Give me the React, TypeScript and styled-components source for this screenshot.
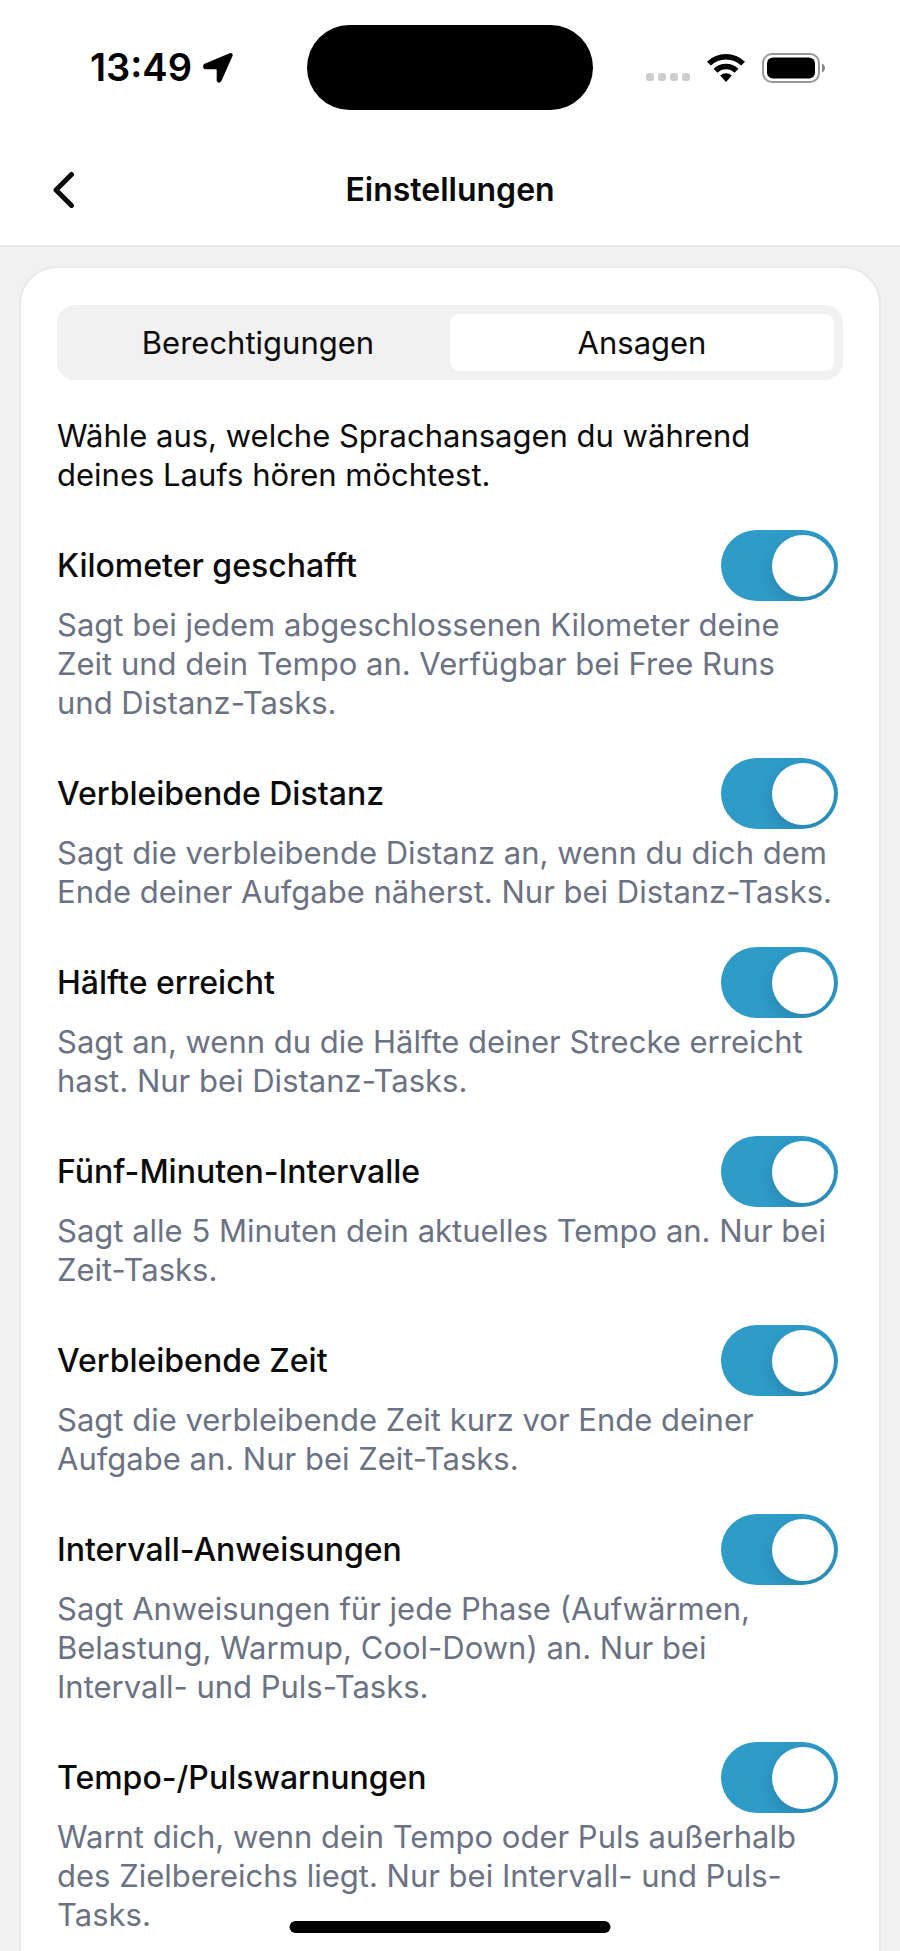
import React, { useState } from "react";
import styled, { createGlobalStyle } from "styled-components";

const GlobalStyle = createGlobalStyle`
  *, *::before, *::after { box-sizing: border-box; }
  body {
    margin: 0;
    background: #f1f1f1;
    color: #0b0b0b;
    font-family: Inter, "Liberation Sans", sans-serif;
    font-size: 31px;
    line-height: 39px;
  }
`;

const Screen = styled.div`
  min-height: 100vh;
  display: flex;
  flex-direction: column;
`;

const Header = styled.header`
  background: #fff;
  border-bottom: 2px solid #ebebeb;
`;

const StatusBar = styled.div`
  display: grid;
  grid-template-columns: 1fr 286px 1fr;
  align-items: center;
  padding: 25px 75px 24px;
  color: #000;
`;

const Clock = styled.div`
  display: flex;
  align-items: center;
  gap: 11px;
  padding-left: 15px;
  font-size: 38px;
  font-weight: 600;
`;

const Island = styled.div`
  height: 85px;
  border-radius: 43px;
  background: #000;
`;

const Indicators = styled.div`
  display: flex;
  align-items: center;
  justify-content: flex-end;
  gap: 16px;
`;

const NavBar = styled.div`
  display: grid;
  grid-template-columns: 48px 1fr 48px;
  align-items: center;
  height: 111px;
  padding: 0 40px 1px;
`;

const BackButton = styled.button`
  display: flex;
  align-items: center;
  justify-content: center;
  height: 64px;
  padding: 0;
  border: 0;
  background: none;
  color: inherit;
`;

const Title = styled.h1`
  margin: 0;
  font-size: 32px;
  font-weight: 600;
  text-align: center;
`;

const Card = styled.main`
  flex: 1;
  margin: 19px 19px 0;
  padding: 37px 36px 0;
  border: 2px solid #e8e8ed;
  border-bottom: 0;
  border-radius: 38px 38px 0 0;
  background: #fff;
`;

const Tabs = styled.div`
  display: grid;
  grid-template-columns: 1fr 1fr;
  height: 75px;
  padding: 9px;
  border-radius: 18px;
  background: #f1f1f1;
`;

const Tab = styled.button<{ $active: boolean }>`
  padding: 0;
  border: 0;
  border-radius: 9px;
  background: ${(p) => (p.$active ? "#fff" : "transparent")};
  color: inherit;
  font: inherit;
`;

const Intro = styled.p`
  margin: 36px 0;
`;

const List = styled.div`
  display: flex;
  flex-direction: column;
  gap: 36px;
`;

const Setting = styled.section`
  display: flex;
  flex-direction: column;
  gap: 4px;
`;

const SettingHead = styled.div`
  display: flex;
  align-items: center;
  justify-content: space-between;
  padding-right: 5px;
`;

const Name = styled.label`
  font-size: 32px;
  font-weight: 500;
`;

const Switch = styled.input`
  appearance: none;
  flex: none;
  display: flex;
  align-items: center;
  width: 117px;
  height: 71px;
  margin: 0;
  padding: 0 4px;
  border-radius: 36px;
  background: #d9d9de;
  overflow: hidden;

  &::before {
    content: "";
    width: 62px;
    height: 62px;
    border-radius: 50%;
    background: #fff;
    box-shadow: 0 6px 16px rgba(0, 0, 0, 0.15);
  }

  &:checked {
    justify-content: flex-end;
    background: #2f9bc9;
  }
`;

const Description = styled.p`
  margin: 0;
  padding-right: 8px;
  color: #6b7283;
`;

const HomeIndicator = styled.div`
  position: fixed;
  bottom: 18px;
  left: 50%;
  width: 321px;
  height: 12px;
  border-radius: 6px;
  background: #000;
  transform: translateX(-50%);
`;

const LocationIcon = () => (
  <svg width="30" height="30" viewBox="0 0 30 30" aria-hidden="true">
    <path d="M26.6.3 1.7 10.8C-.8 12-.3 16.300 2.5 16.300H12.800c.6 0 .9.3.9.9v10c0 2.900 3.500 3.400 4.700.8L29.5 3.1C30.3 1.2 28.5-.5 26.6.3Z" fill="#000" />
  </svg>
);

const SignalIcon = () => (
  <svg width="44" height="28" viewBox="0 0 44 28" aria-hidden="true">
    {[0, 12, 24, 36].map((x) => (
      <rect key={x} x={x} y="19" width="8" height="8" rx="3" fill="#ccc" />
    ))}
  </svg>
);

const WifiIcon = () => (
  <svg width="40" height="28" viewBox="0 0 40 28" aria-hidden="true">
    <path d="M1 7.7 A27.5 27.5 0 0 1 39 7.7 L35.2 11.6 A22 22 0 0 0 4.8 11.6 Z" />
    <path d="M7.6 14.8 A18 18 0 0 1 32.4 14.8 L28.5 18.7 A12.5 12.5 0 0 0 11.5 18.7 Z" />
    <path d="M14.2 21.5 A8.6 8.6 0 0 1 25.8 21.5 L20.5 27.5 Q20 28 19.5 27.5 Z" />
  </svg>
);

const BatteryIcon = () => (
  <svg width="63" height="30" viewBox="0 0 63 30" aria-hidden="true">
    <rect x="1" y="1" width="56" height="28" rx="9" fill="none" stroke="#999" strokeWidth="2" />
    <rect x="5" y="4.500" width="48" height="21" rx="6" fill="#000" />
    <path d="M60 10.5c4 1.6 4 7.4 0 9Z" fill="#888" />
  </svg>
);

const BackIcon = () => (
  <svg width="22" height="38" viewBox="0 0 22 38" aria-hidden="true">
    <path d="M18.5 4.5 3 20l15.5 15.5" fill="none" stroke="currentColor" strokeWidth="5" strokeLinecap="round" strokeLinejoin="round" />
  </svg>
);

const settings = [
  { id: "kilometer", name: "Kilometer geschafft", text: "Sagt bei jedem abgeschlossenen Kilometer deine Zeit und dein Tempo an. Verfügbar bei Free Runs und Distanz-Tasks." },
  { id: "distanz", name: "Verbleibende Distanz", text: "Sagt die verbleibende Distanz an, wenn du dich dem Ende deiner Aufgabe näherst. Nur bei Distanz-Tasks." },
  { id: "haelfte", name: "Hälfte erreicht", text: "Sagt an, wenn du die Hälfte deiner Strecke erreicht hast. Nur bei Distanz-Tasks." },
  { id: "minuten", name: "Fünf-Minuten-Intervalle", text: "Sagt alle 5 Minuten dein aktuelles Tempo an. Nur bei Zeit-Tasks." },
  { id: "zeit", name: "Verbleibende Zeit", text: "Sagt die verbleibende Zeit kurz vor Ende deiner Aufgabe an. Nur bei Zeit-Tasks." },
  { id: "intervall", name: "Intervall-Anweisungen", text: "Sagt Anweisungen für jede Phase (Aufwärmen, Belastung, Warmup, Cool-Down) an. Nur bei Intervall- und Puls-Tasks." },
  { id: "warnungen", name: "Tempo-/Pulswarnungen", text: "Warnt dich, wenn dein Tempo oder Puls außerhalb des Zielbereichs liegt. Nur bei Intervall- und Puls-Tasks." },
];

const tabs = ["Berechtigungen", "Ansagen"];

export default function App() {
  const [active, setActive] = useState("Ansagen");
  return (
    <Screen>
      <GlobalStyle />
      <Header>
        <StatusBar>
          <Clock>
            <span>13:49</span>
            <LocationIcon />
          </Clock>
          <Island />
          <Indicators>
            <SignalIcon />
            <WifiIcon />
            <BatteryIcon />
          </Indicators>
        </StatusBar>
        <NavBar>
          <BackButton aria-label="Zurück">
            <BackIcon />
          </BackButton>
          <Title>Einstellungen</Title>
        </NavBar>
      </Header>
      <Card>
        <Tabs role="tablist">
          {tabs.map((tab) => (
            <Tab key={tab} role="tab" aria-selected={tab === active} $active={tab === active} onClick={() => setActive(tab)}>
              {tab}
            </Tab>
          ))}
        </Tabs>
        <Intro>Wähle aus, welche Sprachansagen du während deines Laufs hören möchtest.</Intro>
        <List>
          {settings.map((s) => (
            <Setting key={s.id}>
              <SettingHead>
                <Name htmlFor={s.id}>{s.name}</Name>
                <Switch id={s.id} type="checkbox" role="switch" defaultChecked aria-describedby={`${s.id}-text`} />
              </SettingHead>
              <Description id={`${s.id}-text`}>{s.text}</Description>
            </Setting>
          ))}
        </List>
      </Card>
      <HomeIndicator />
    </Screen>
  );
}
